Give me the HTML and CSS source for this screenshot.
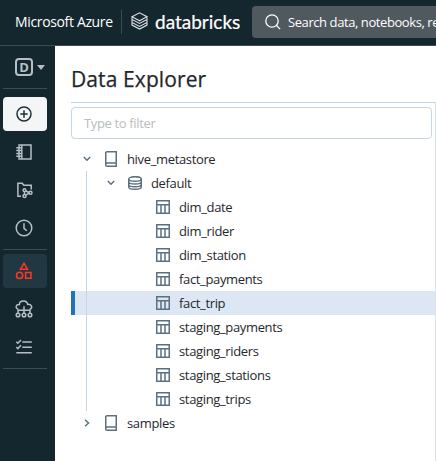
FILE: index.html
```
<!DOCTYPE html>
<html lang="en">
<head>
<meta charset="utf-8">
<title>Data Explorer</title>
<link rel="stylesheet" href="styles.css">
</head>
<body>
<svg class="defs" width="0" height="0" aria-hidden="true">
  <symbol id="table" viewBox="0 0 14 14"><path d="M.75.75h12.5v12.5H.75zM.75 4.75h12.5M5 4.75v8.5M9 4.75v8.5"/></symbol>
  <symbol id="book" viewBox="0 0 12 16"><path d="M2 .75h9.25v14.5H2A1.25 1.25 0 0 1 .75 14V2A1.25 1.25 0 0 1 2 .75zM.75 13.5Q.75 12 2.25 12h9"/></symbol>
  <symbol id="database" viewBox="0 0 14 14"><ellipse cx="7" cy="3" rx="6.25" ry="2.3"/><path d="M.75 3v8c0 3 12.5 3 12.5 0V3M.75 5.8c0 3 12.5 3 12.5 0M.75 8.4c0 3 12.5 3 12.5 0"/></symbol>
  <symbol id="down" viewBox="0 0 8 6"><path d="M.8 1 4 4.2 7.2 1"/></symbol>
  <symbol id="right" viewBox="0 0 6 8"><path d="M1 .8 4.5 4 1 7.2"/></symbol>
</svg>
<header class="topbar">
  <span class="azure">Microsoft Azure</span>
  <span class="brand">
    <svg class="stack" width="17" height="18" viewBox="0 0 17 18"><path d="M1 4.7 8.5.8 16 4.7 8.5 8.8zM1 4.7v2.8l7.5 4 7.5-4V5.6M1 7.5v3l7.5 4 7.5-4v-3M1 10.5v2.6l7.5 4 7.5-4v-2.6"/></svg>
    <span class="wordmark">databricks</span>
  </span>
  <div class="search">
    <svg width="16" height="16" viewBox="0 0 16 16"><circle cx="7" cy="7" r="6.2"/><path d="m11.3 11.3 3.8 3.8"/></svg>
    <span>Search data, notebooks, re</span>
  </div>
</header>
<div class="layout">
  <nav class="sidebar">
    <div class="persona"><span class="letter">D</span><i class="caret"></i></div>
    <div class="group">
      <a class="item create"><svg width="16" height="16" viewBox="0 0 16 16"><circle cx="8" cy="8" r="7"/><path d="M8 4.3v7.4M4.3 8h7.4"/></svg></a>
      <a class="item"><svg width="16" height="16" viewBox="0 0 16 16"><path d="M3 .9h12v14.2H3zM5.8 1v14M.3 3.8h5M.3 6.6h5M.3 9.4h5M.3 12.2h5"/></svg></a>
      <a class="item"><svg width="17" height="17" viewBox="0 0 17 17"><path d="M5 14.3H1.9V1.2h4.3l1.6 2.1h7.4v4.2M8.5 9.6v2.7M9.7 9l3.4 1.5M9.7 13.2l3.4-2"/><circle cx="8.5" cy="8.2" r="1.4"/><circle cx="8.5" cy="14" r="1.5"/><circle cx="14.5" cy="10.8" r="1.5"/></svg></a>
      <a class="item"><svg width="18" height="18" viewBox="0 0 18 18"><circle cx="9" cy="9" r="7.8"/><path d="M9 4.3v5l2.8 2.5"/></svg></a>
    </div>
    <div class="group work">
      <a class="item active"><svg width="18" height="18" viewBox="0 0 18 18"><path d="m9 1.3 3.5 6h-7zM10.6 10.6H16v5.6h-5.4z"/><circle cx="4.6" cy="13.4" r="3.1"/></svg></a>
      <a class="item"><svg width="18" height="18" viewBox="0 0 18 18"><path d="M3.3 9.2C-.2 8.2.8 4.4 4.3 4.6 4.6 0 12 0 12.6 4.3c4.4-.5 5.5 4.2 2 5M9 6.3v7M3 13v-2.7h12V13"/><circle cx="3" cy="15" r="1.8"/><circle cx="9" cy="15" r="1.8"/><circle cx="15" cy="15" r="1.8"/></svg></a>
      <a class="item"><svg width="16" height="16" viewBox="0 0 16 16"><path d="M6.3 3h9.5M6.3 8.3h9.5M.3 13.7h15.5M.3 2.8l1.5 1.5L5 1M.3 8.1l1.5 1.5L5 6.3"/></svg></a>
    </div>
  </nav>
  <main>
    <div class="panel">
      <h1>Data Explorer</h1>
      <div class="explorer">
        <input class="filter" placeholder="Type to filter" aria-label="Type to filter">
        <div class="tree">
          <div class="row root"><svg class="arrow" width="8" height="6"><use href="#down"/></svg><svg class="icon" width="12" height="16"><use href="#book"/></svg><span>hive_metastore</span></div>
          <div class="children">
            <div class="row schema"><svg class="arrow" width="8" height="6"><use href="#down"/></svg><svg class="icon" width="14" height="14"><use href="#database"/></svg><span>default</span></div>
            <div class="row leaf"><svg width="14" height="14"><use href="#table"/></svg><span>dim_date</span></div>
            <div class="row leaf"><svg width="14" height="14"><use href="#table"/></svg><span>dim_rider</span></div>
            <div class="row leaf"><svg width="14" height="14"><use href="#table"/></svg><span>dim_station</span></div>
            <div class="row leaf"><svg width="14" height="14"><use href="#table"/></svg><span>fact_payments</span></div>
            <div class="row leaf selected"><svg width="14" height="14"><use href="#table"/></svg><span>fact_trip</span></div>
            <div class="row leaf"><svg width="14" height="14"><use href="#table"/></svg><span>staging_payments</span></div>
            <div class="row leaf"><svg width="14" height="14"><use href="#table"/></svg><span>staging_riders</span></div>
            <div class="row leaf"><svg width="14" height="14"><use href="#table"/></svg><span>staging_stations</span></div>
            <div class="row leaf"><svg width="14" height="14"><use href="#table"/></svg><span>staging_trips</span></div>
          </div>
          <div class="row root"><svg class="arrow" width="6" height="8"><use href="#right"/></svg><svg class="icon" width="12" height="16"><use href="#book"/></svg><span>samples</span></div>
        </div>
      </div>
    </div>
  </main>
</div>
</body>
</html>
```

FILE: styles.css
```
* { box-sizing: border-box; }
body {
  margin: 0;
  height: 461px;
  overflow: hidden;
  background: #fff;
  color: #1f272d;
  font: 13px/24px "Open Sans", "Noto Sans", sans-serif;
}
.defs { position: absolute; }
svg { display: block; flex: none; fill: none; stroke: currentColor; stroke-width: 1.5; }
.topbar {
  display: flex;
  align-items: center;
  height: 46px;
  padding: 0 0 2px 15px;
  overflow: hidden;
  white-space: nowrap;
  background: #14272e;
  border-bottom: 1px solid #3b4c53;
  color: #fff;
}
.azure { flex: none; width: 106px; font-size: 14px; letter-spacing: -0.35px; }
.brand {
  display: flex;
  flex: none;
  align-items: center;
  width: 131px;
  height: 24px;
  padding-left: 9px;
  border-left: 1px solid #3b4c53;
}
.stack { margin-top: -2px; stroke-width: 1.1; color: #dde1e3; }
.wordmark { margin-left: 7px; font: 400 19px/24px Lato, sans-serif; letter-spacing: 0; -webkit-text-stroke: 0.2px #fff; }
.search {
  display: flex;
  flex: none;
  align-items: center;
  width: 400px;
  height: 32px;
  padding-left: 13px;
  border-radius: 4px;
  background: #4f595e;
}
.search svg { stroke-width: 1.3; }
.search span { margin-left: 7px; letter-spacing: -0.42px; }
.layout { display: flex; height: 415px; }
.sidebar { width: 55px; flex: none; padding: 10px 8px 0 3px; background: #14272e; color: #b5c0c5; }
.persona { display: flex; align-items: center; height: 22px; padding-left: 12px; }
.letter {
  width: 18px;
  height: 18px;
  border: 2px solid #b5c0c5;
  border-radius: 4px;
  font-size: 13px;
  font-weight: 700;
  line-height: 15px;
  text-align: center;
}
.caret { margin-left: 4px; border: 4px solid transparent; border-top: 5px solid #b5c0c5; border-bottom: 0; }
.group { display: flex; flex-direction: column; gap: 4px; margin-top: 10px; padding-top: 8px; border-top: 1px solid #3b4c53; }
.work { margin-top: 4px; padding: 4px 0; border-bottom: 1px solid #3b4c53; }
.item { display: flex; align-items: center; justify-content: center; height: 34px; padding-right: 2px; border-radius: 4px; }
.create { background: #f4f5f7; color: #1b3139; }
.active { background: #213843; color: #ff3621; }
main { flex: 1; min-width: 0; padding-left: 16px; }
h1 { margin: 0; height: 57px; padding-top: 17px; border-bottom: 1px solid #c5d6e5; font-size: 21px; line-height: 32px; font-weight: 500; letter-spacing: 0.1px; -webkit-text-stroke: 0.25px #1f272d; }
.explorer { height: 358px; padding-top: 4px; border-right: 1px solid #dce4eb; }
.filter { display: block; width: calc(100% - 3px); height: 32px; padding: 0 12px; border: 1px solid #c5d6e5; border-radius: 4px; font: inherit; letter-spacing: -0.35px; }
.filter::placeholder { color: #b9bdc0; opacity: 1; }
.tree { padding-top: 8px; letter-spacing: -0.35px; }
.row { display: flex; align-items: center; height: 24px; }
.row svg { color: #5b7081; }
.root { padding-left: 12px; }
.root .arrow { margin-right: 14px; width: 8px; }
.root .icon { margin-right: 10px; }
.schema { padding-left: 36px; }
.schema .arrow { margin-right: 13px; }
.schema .icon { margin-right: 9px; }
.leaf { padding-left: 85px; }
.leaf svg { margin-right: 9px; }
.selected { background: #dce7f3; box-shadow: inset 4px 0 #2272b4; }
.children { position: relative; }
.children::before { content: ""; position: absolute; top: 0; bottom: 0; left: 15px; width: 1px; background: #c5d6e5; }
```
